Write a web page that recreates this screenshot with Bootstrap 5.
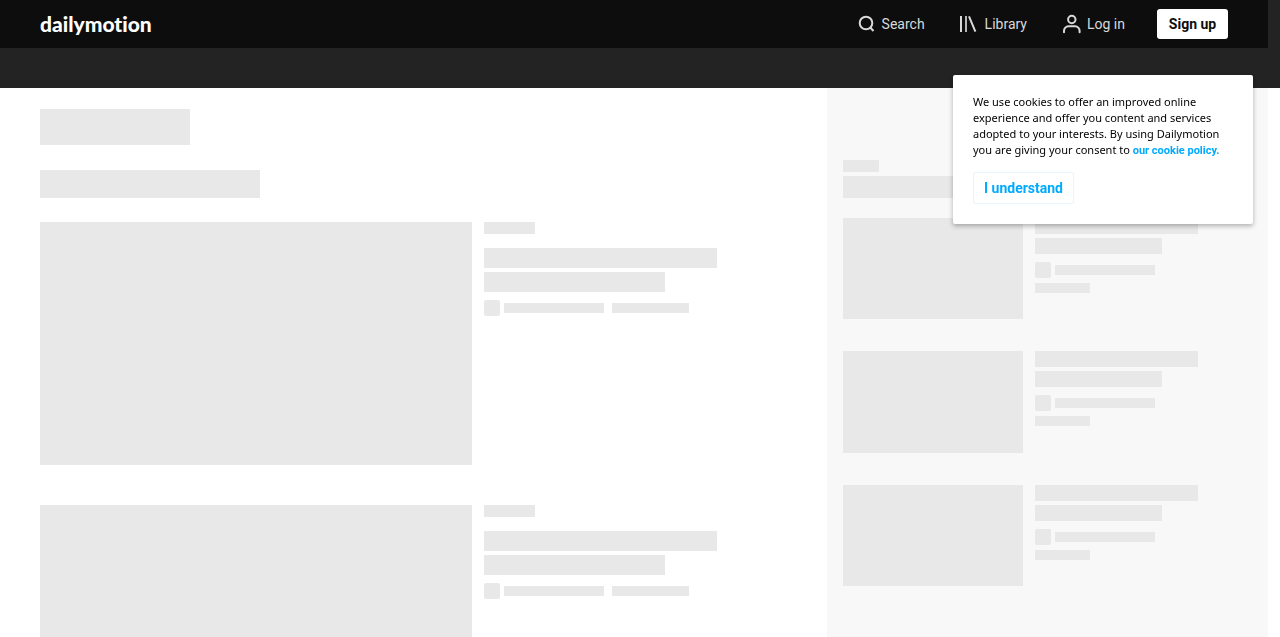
<!DOCTYPE html>
<html lang="en">
<head>
<meta charset="utf-8">
<meta name="viewport" content="width=device-width, initial-scale=1">
<title>Dailymotion</title>
<link href="https://cdn.jsdelivr.net/npm/bootstrap@5.3.0/dist/css/bootstrap.min.css" rel="stylesheet">
<style>
  body { font-family: "Noto Sans", sans-serif; font-size: 13px; color: #0d0d0d; background: #fff; }
  .page { padding-right: 12px; }
  .top-band { background: #232323; height: 88px; }
  .topbar { background: #0d0d0d; height: 48px; padding: 0 40px; margin-right: 12px; }
  .logo { font-family: Lato, sans-serif; font-weight: 900; font-size: 21px; line-height: 24px; color: #fff; font-variant-ligatures: none; }
  .nav-item-link { font-size: 14px; line-height: 20px; color: #d9d9d9; gap: 6px; font-family: Roboto, sans-serif; }
  .top-nav { gap: 34px; }
  .top-nav svg { width: 20px; height: 20px; fill: none; stroke: #d9d9d9; stroke-width: 2; }
  .signup { background: #fff; color: #0d0d0d; height: 30px; width: 71px; border-radius: 3px; font-family: Roboto, sans-serif; font-size: 14px; font-weight: 700; line-height: 28px; }
  .signup:hover { background: #e7e7e7; }
  .feed { padding: 21px 40px 0; }
  .side { width: 441px; background: #f8f8f8; padding: 72px 16px 0; }
  .sk { background: #e8e8e8; }
  .story { gap: 12px; margin-bottom: 40px; }
  .side-story { gap: 12px; margin-bottom: 32px; }
  .thumb-lg { width: 432px; aspect-ratio: 16 / 9; }
  .thumb-sm { width: 180px; aspect-ratio: 16 / 9; }
  .h-title { width: 150px; height: 36px; margin-bottom: 25px; }
  .h-sub { width: 220px; height: 28px; margin-bottom: 24px; }
  .s-label { width: 36px; height: 12px; margin-bottom: 4px; }
  .s-title { width: 220px; height: 22px; margin-bottom: 20px; }
  .tag { width: 51px; height: 12px; margin-bottom: 14px; }
  .line-a { width: 233px; height: 20px; }
  .line-b { width: 181px; height: 20px; }
  .line-c { width: 163px; height: 16px; }
  .line-d { width: 127px; height: 16px; }
  .avatar { width: 16px; height: 16px; border-radius: 2px; }
  .name { width: 100px; height: 10px; }
  .date { width: 77px; height: 10px; }
  .date-sm { width: 55px; height: 10px; margin-top: 5px; }
  .cookie { top: 75px; right: 27px; width: 300px; padding: 19px 20px 20px; background: #fff; border-radius: 2px; box-shadow: 0 2px 5px rgba(0,0,0,.3); z-index: 10; }
  .cookie p { font-size: 11px; line-height: 16px; margin-bottom: 14px; color: #000; }
  .cookie a { color: #00aaff; font-family: Roboto, sans-serif; font-size: 11px; font-weight: 700; line-height: 12px; }
  .agree { width: 101px; height: 32px; border: 1px solid #e5f6ff; border-radius: 2px; color: #00aaff; font-family: Roboto, sans-serif; font-size: 14px; font-weight: 700; line-height: 28px; }
</style>
<script src="https://cdn.jsdelivr.net/npm/bootstrap@5.3.0/dist/js/bootstrap.bundle.min.js"></script>
</head>
<body>
<div class="vh-100 overflow-hidden d-flex flex-column">
  <header class="top-band flex-shrink-0">
    <nav class="topbar d-flex align-items-center justify-content-between" aria-label="Main">
      <a class="logo text-decoration-none" href="#">dailymotion</a>
      <div class="d-flex align-items-center">
        <div class="top-nav d-flex align-items-center me-2 pe-4">
          <a class="nav-item-link d-flex align-items-center text-decoration-none" href="#"><svg viewBox="0 0 20 20" aria-hidden="true"><circle cx="10" cy="9" r="6.300"/><path d="M13.800 13l3.700 4"/></svg><span>Search</span></a>
          <a class="nav-item-link d-flex align-items-center text-decoration-none" href="#"><svg viewBox="0 0 20 20" aria-hidden="true"><path d="M2 2v16M10 2.300l6.400 15.400"/><path stroke="#b5b5b5" d="M7 2v16"/></svg><span>Library</span></a>
          <a class="nav-item-link d-flex align-items-center text-decoration-none" href="#"><svg viewBox="0 0 20 20" aria-hidden="true" stroke-linecap="round"><circle cx="10.800" cy="5.500" r="3.700"/><path d="M3 18.300v-1.500a4.500 4.500 0 0 1 4.500-4.500h6.600a4.500 4.500 0 0 1 4.500 4.500v1.500"/></svg><span>Log in</span></a>
        </div>
        <button type="button" class="btn signup p-0 border-0">Sign up</button>
      </div>
    </nav>
  </header>

  <div class="page d-flex flex-grow-1 overflow-hidden">
    <main class="feed flex-grow-1">
      <div class="sk h-title"></div>
      <div class="sk h-sub"></div>
      <article class="story d-flex">
        <div class="sk thumb-lg flex-shrink-0"></div>
        <div>
          <div class="sk tag"></div>
          <div class="sk line-a mb-1"></div>
          <div class="sk line-b mb-2"></div>
          <div class="d-flex align-items-center"><div class="sk avatar me-1"></div><div class="sk name me-2"></div><div class="sk date"></div></div>
        </div>
      </article>
      <article class="story d-flex">
        <div class="sk thumb-lg flex-shrink-0"></div>
        <div>
          <div class="sk tag"></div>
          <div class="sk line-a mb-1"></div>
          <div class="sk line-b mb-2"></div>
          <div class="d-flex align-items-center"><div class="sk avatar me-1"></div><div class="sk name me-2"></div><div class="sk date"></div></div>
        </div>
      </article>
    </main>

    <aside class="side flex-shrink-0">
      <div class="sk s-label"></div>
      <div class="sk s-title"></div>
      <article class="side-story d-flex">
        <div class="sk thumb-sm flex-shrink-0"></div>
        <div>
          <div class="sk line-c mb-1"></div>
          <div class="sk line-d mb-2"></div>
          <div class="d-flex align-items-center"><div class="sk avatar me-1"></div><div class="sk name"></div></div>
          <div class="sk date-sm"></div>
        </div>
      </article>
      <article class="side-story d-flex">
        <div class="sk thumb-sm flex-shrink-0"></div>
        <div>
          <div class="sk line-c mb-1"></div>
          <div class="sk line-d mb-2"></div>
          <div class="d-flex align-items-center"><div class="sk avatar me-1"></div><div class="sk name"></div></div>
          <div class="sk date-sm"></div>
        </div>
      </article>
      <article class="side-story d-flex">
        <div class="sk thumb-sm flex-shrink-0"></div>
        <div>
          <div class="sk line-c mb-1"></div>
          <div class="sk line-d mb-2"></div>
          <div class="d-flex align-items-center"><div class="sk avatar me-1"></div><div class="sk name"></div></div>
          <div class="sk date-sm"></div>
        </div>
      </article>
    </aside>
  </div>
</div>

<section class="cookie position-fixed" aria-label="Cookie notice">
  <p>We use cookies to offer an improved online<br>experience and offer you content and services<br>adopted to your interests. By using Dailymotion<br>you are giving your consent to <a class="text-decoration-none" href="#">our cookie policy.</a></p>
  <button type="button" class="btn agree p-0">I understand</button>
</section>
</body>
</html>
